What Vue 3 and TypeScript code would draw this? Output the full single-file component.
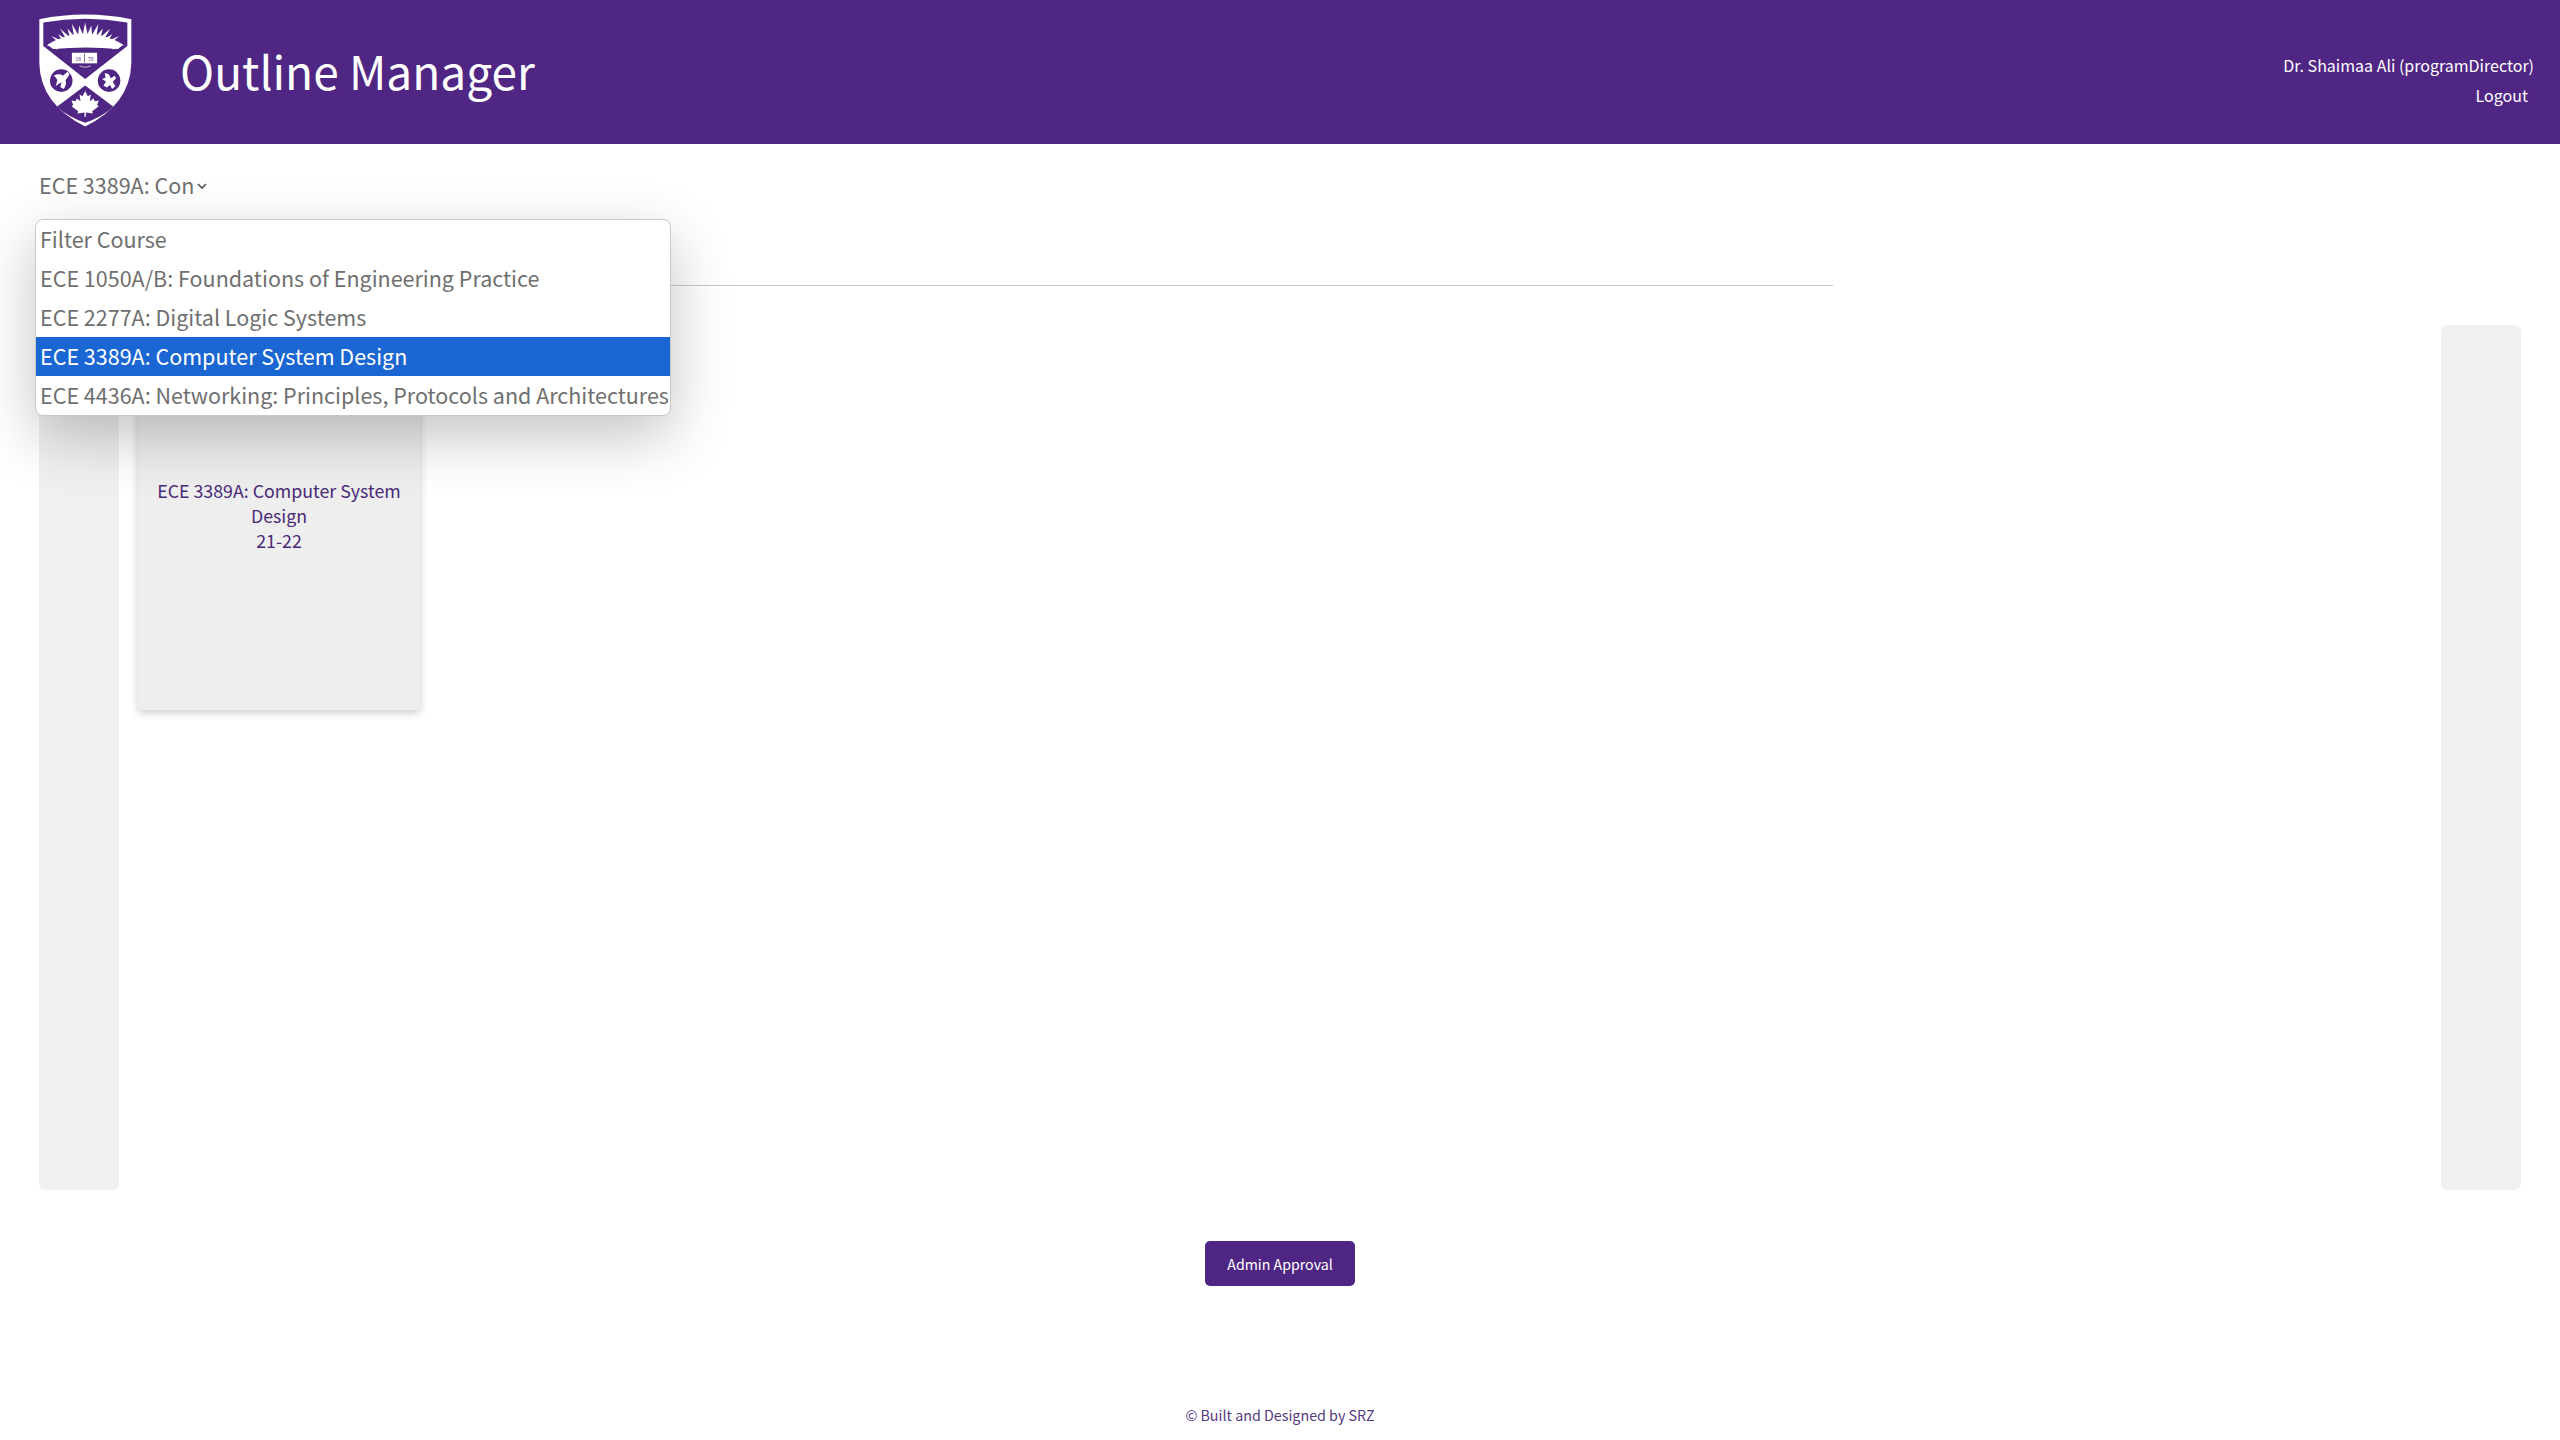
<template>
  <div class="page">
    <header class="topbar">
      <div class="brand">
        <svg class="crest" viewBox="58 38 280 342" aria-label="crest">
          <path fill="#fff" d="M59 56 Q197 28 336 56 L336 190 Q332 312 197 379 Q63 312 59 190 Z" />
          <path fill="#4f2683" d="M71 66 Q197 44 324 66 L324 137 L197 236 L71 137 Z" />
          <polygon v-for="(ray, i) in sunRays" :key="i" :points="ray" fill="#fff" />
          <path fill="#fff" d="M84 132 Q197 66 311 132 L296 146 Q197 136 100 146 Z" />
          <rect x="157" y="157" width="76" height="32" fill="#fff" />
          <rect x="194" y="159" width="2" height="28" fill="#4f2683" />
          <text x="176" y="181" class="crest-year">18</text>
          <text x="214" y="181" class="crest-year">78</text>
          <path d="M180 197 Q197 205 214 197" fill="none" stroke="#fff" stroke-width="2" />
          <circle cx="125" cy="241" r="34" fill="#4f2683" />
          <path fill="#fff" d="M102 226 Q120 218 130 226 L144 214 L150 222 L138 240 Q142 254 132 266 L122 260 L126 246 Q116 250 108 258 L112 244 Q116 236 102 226 Z" />
          <circle cx="269" cy="241" r="34" fill="#4f2683" />
          <path fill="#fff" d="M256 218 L268 222 L274 234 L286 226 L290 234 L280 244 L288 258 L278 266 L272 254 L262 262 L252 256 L260 244 L248 236 L258 232 Z" />
          <path fill="#4f2683" d="M197 256 L282 320 Q246 352 197 368 Q148 352 112 320 Z" />
          <path fill="#fff" d="M197 272 L205 288 L214 283 L211 303 L222 295 L226 303 L238 301 L233 314 L238 318 L218 333 L220 340 L199 337 L199 350 L195 350 L195 337 L174 340 L176 333 L156 318 L161 314 L156 301 L168 303 L172 295 L183 303 L180 283 L189 288 Z" />
        </svg>
        <h1 class="title">Outline Manager</h1>
      </div>
      <div class="user-box">
        <div class="user-name">Dr. Shaimaa Ali (programDirector)</div>
        <a class="logout">Logout</a>
      </div>
    </header>

    <main class="content">
      <div class="filter">
        <span class="filter-value">ECE 3389A: Con</span>
        <svg class="chevron" viewBox="0 0 10 6"><path d="M1 1l4 4 4-4" fill="none" stroke="#555" stroke-width="1.7" /></svg>
        <ul class="filter-menu">
          <li
            v-for="course in courses"
            :key="course"
            :class="{ selected: course === selectedCourse }"
          >{{ course }}</li>
        </ul>
      </div>

      <div class="tabs"></div>

      <section class="carousel">
        <div class="arrow-col"></div>
        <div class="cards">
          <article class="card">
            <div>ECE 3389A: Computer System Design</div>
            <div>21-22</div>
          </article>
        </div>
        <div class="arrow-col"></div>
      </section>

      <div class="actions">
        <button class="approve-btn">Admin Approval</button>
      </div>
    </main>

    <footer class="footer">© Built and Designed by SRZ</footer>
  </div>
</template>

<script setup lang="ts">
const courses: string[] = [
  'Filter Course',
  'ECE 1050A/B: Foundations of Engineering Practice',
  'ECE 2277A: Digital Logic Systems',
  'ECE 3389A: Computer System Design',
  'ECE 4436A: Networking: Principles, Protocols and Architectures'
]
const selectedCourse = 'ECE 3389A: Computer System Design'

// sun rays on the crest, fanned around the middle of the chief
const sunRays: string[] = []
for (let i = 0; i < 17; i++) {
  const a = (Math.PI * (i - 8)) / 19
  const tipLen = i % 2 === 0 ? 90 : 82
  const cx = 197
  const cy = 156
  const tip = [cx + Math.sin(a) * tipLen * 1.36, cy - Math.cos(a) * tipLen]
  const l = [cx + Math.sin(a - 0.085) * 62 * 1.36, cy - Math.cos(a - 0.085) * 54]
  const r = [cx + Math.sin(a + 0.085) * 62 * 1.36, cy - Math.cos(a + 0.085) * 54]
  sunRays.push(`${tip[0]},${tip[1]} ${l[0]},${l[1]} ${r[0]},${r[1]}`)
}
</script>

<style>
body {
  background: #fff;
}
</style>

<style scoped>
.page {
  height: 1440px;
  display: flex;
  flex-direction: column;
  font-family: "Noto Sans CJK SC", "Noto Sans", sans-serif;
  overflow: hidden;
}

.topbar {
  height: 144px;
  background-color: #4f2683;
  color: #fff;
  display: flex;
  justify-content: space-between;
  align-items: flex-start;
  padding: 0 26px 0 39px;
  box-sizing: border-box;
  flex-shrink: 0;
}

.brand {
  display: flex;
  align-items: center;
  height: 144px;
}

.crest {
  width: 93px;
  height: 114px;
  margin-top: -4px;
  margin-right: 48px;
}

.crest-year {
  font-size: 15px;
  fill: #4f2683;
  text-anchor: middle;
}

.title {
  margin: -4px 0 0;
  font-size: 46px;
  font-weight: 400;
  line-height: 1;
}

.user-box {
  text-align: right;
  font-size: 16px;
  line-height: 30px;
  padding-top: 50px;
}

.logout {
  display: block;
  padding-right: 6px;
}

.content {
  flex: 1;
  padding: 0 39px;
  display: flex;
  flex-direction: column;
}

.filter {
  position: relative;
  display: flex;
  align-items: center;
  height: 84px;
  color: #6f6f6f;
  font-size: 21.5px;
}

.filter-value {
  margin-top: -3px;
}

.chevron {
  width: 10px;
  height: 6px;
  margin-left: 3px;
}

.filter-menu {
  position: absolute;
  left: -4px;
  top: 75px;
  width: 636px;
  margin: 0;
  padding: 0;
  list-style: none;
  background: #fff;
  border: 1px solid #c8c8c8;
  border-radius: 8px;
  box-sizing: border-box;
  overflow: hidden;
  box-shadow: 0 20px 60px rgba(0, 0, 0, 0.24);
  z-index: 10;
}

.filter-menu li {
  height: 39px;
  line-height: 37px;
  padding-left: 4px;
  white-space: nowrap;
  color: #6f6f6f;
}

.filter-menu li.selected {
  background-color: #1a66d2;
  color: #fff;
}

.tabs {
  width: 1794px;
  height: 58px;
  border-bottom: 1px solid #c9c9c9;
  box-sizing: border-box;
}

.carousel {
  margin-top: 39px;
  height: 865px;
  display: flex;
  justify-content: space-between;
  align-items: stretch;
}

.arrow-col {
  width: 80px;
  background-color: #f0f0f0;
  border-radius: 6px;
}

.cards {
  flex: 1;
  padding: 20px 18px;
}

.card {
  width: 282px;
  height: 365px;
  margin-left: 1px;
  box-sizing: border-box;
  padding-top: 133px;
  background-color: #eeeeee;
  border-radius: 4px;
  box-shadow: 0 3px 8px rgba(0, 0, 0, 0.2);
  text-align: center;
  font-size: 17.8px;
  line-height: 25px;
  color: #4a2a78;
}

.actions {
  display: flex;
  justify-content: center;
  margin-top: 51px;
}

.approve-btn {
  width: 150px;
  height: 45px;
  border: none;
  border-radius: 5px;
  background-color: #4f2683;
  color: #fff;
  font-family: inherit;
  font-size: 14.2px;
}

.footer {
  margin-bottom: 13px;
  text-align: center;
  color: #55397f;
  font-size: 14.3px;
  line-height: 24px;
}
</style>
